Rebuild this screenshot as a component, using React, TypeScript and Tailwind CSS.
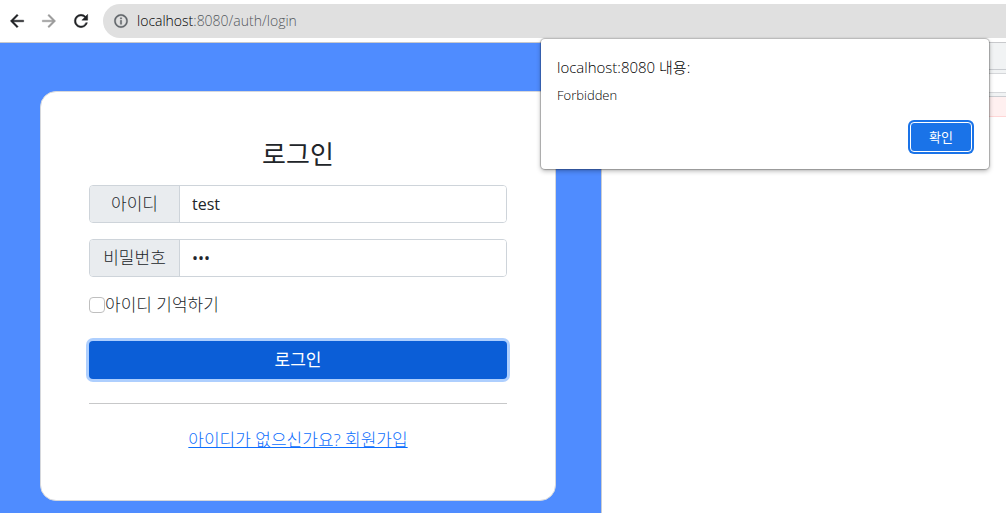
import React, { useState } from 'react';

const icons = {
    back: 'M20 11H7.83l5.59-5.59L12 4l-8 8 8 8 1.41-1.41L7.83 13H20v-2z',
    forward: 'M12 4l-1.41 1.41L16.17 11H4v2h12.17l-5.58 5.59L12 20l8-8z',
    reload: 'M17.65 6.35A7.958 7.958 0 0 0 12 4a8 8 0 1 0 7.73 10h-2.08A5.99 5.99 0 0 1 12 18c-3.31 0-6-2.69-6-6s2.69-6 6-6c1.66 0 3.14.69 4.22 1.78L13 11h7V4l-2.35 2.35z',
    info: 'M11 7h2v2h-2zm0 4h2v6h-2zm1-9C6.48 2 2 6.48 2 12s4.48 10 10 10 10-4.48 10-10S17.52 2 12 2zm0 18c-4.41 0-8-3.59-8-8s3.59-8 8-8 8 3.59 8 8-3.59 8-8 8z',
};

const Icon = ({ name, className }: { name: keyof typeof icons; className: string }) => {
    return (
        <svg viewBox="0 0 24 24" fill="currentColor" stroke="currentColor" strokeWidth={0.5} className={className}>
            <path d={icons[name]} />
        </svg>
    );
};

const BrowserBar = () => {
    return (
        <header className="flex items-center h-[43px] border-b border-[#c8c9cc] bg-white">
            <nav className="flex items-center gap-3 pl-[7px] pr-3 text-[#202124]">
                <button type="button" aria-label="Back">
                    <Icon name="back" className="size-5" />
                </button>
                <button type="button" aria-label="Forward" className="text-[#9b9b9b]">
                    <Icon name="forward" className="size-5" />
                </button>
                <button type="button" aria-label="Reload">
                    <Icon name="reload" className="size-5" />
                </button>
            </nav>
            <div className="flex flex-1 items-center gap-2 h-[34px] pl-[10px] rounded-l-full bg-[#e0e0e0]">
                <Icon name="info" className="size-4 shrink-0 text-[#5f6368]" />
                <div
                    role="textbox"
                    aria-label="Address"
                    contentEditable
                    suppressContentEditableWarning
                    className="flex-1 text-sm text-black outline-none"
                >
                    localhost<span className="text-[#54585d]">:8080/auth/login</span>
                </div>
            </div>
        </header>
    );
};

const Field = ({ id, label, type, value, onChange }: any) => {
    return (
        <div className="flex h-[38px] mb-4 border border-[#ced4da] rounded-sm overflow-hidden">
            <label
                htmlFor={id}
                className="flex items-center justify-center w-[90px] shrink-0 border-r border-[#ced4da] bg-[#e9ecef] text-[17px]"
            >
                {label}
            </label>
            <input
                id={id}
                type={type}
                value={value}
                onChange={(e) => onChange(e.target.value)}
                className="flex-1 min-w-0 px-3 text-base font-normal bg-white outline-none"
            />
        </div>
    );
};

const LoginCard = () => {
    const [userId, setUserId] = useState('test');
    const [password, setPassword] = useState('123');
    const [remember, setRemember] = useState(false);

    return (
        <form
            onSubmit={(e) => e.preventDefault()}
            className="p-12 border border-[#d6d8dc] rounded-2xl bg-white text-[#212529]"
        >
            <h1 className="mb-4 text-[26px] leading-[29px] font-normal text-center">로그인</h1>
            <Field id="userId" label="아이디" type="text" value={userId} onChange={setUserId} />
            <Field id="password" label="비밀번호" type="password" value={password} onChange={setPassword} />
            <div className="flex items-center h-6 mb-6">
                <input
                    id="remember"
                    type="checkbox"
                    checked={remember}
                    onChange={(e) => setRemember(e.target.checked)}
                    className="size-4 appearance-none border border-[#bfbfbf] rounded-sm bg-white checked:bg-[#0d6efd]"
                />
                <label htmlFor="remember" className="text-[17px] leading-6">
                    아이디 기억하기
                </label>
            </div>
            <button
                type="submit"
                className="block w-full h-[38px] rounded-sm bg-[#0b5ed7] ring-3 ring-[#aecffe] text-[17px] font-normal text-white"
            >
                로그인
            </button>
            <hr className="my-6 border-[#c7c8c9]" />
            <p className="text-center text-[17px] leading-6">
                <a href="/auth/signup" className="text-[#0d6efd] underline">
                    아이디가 없으신가요? 회원가입
                </a>
            </p>
        </form>
    );
};

// docked inspector, mostly hidden behind the alert
const DevTools = () => {
    return (
        <aside className="w-[404px] shrink-0 bg-white">
            <div className="h-[27px] border-b border-[#cacdd1] bg-[#f1f3f4]" />
            <div className="h-[27px] pt-[3px] pb-[3px] border-b border-[#cacdd1] bg-[#f1f3f4]">
                <div className="h-full border-y border-[#d5d7da] bg-white" />
            </div>
            <div className="h-5 border-b border-[#ffd6d6] bg-[#fff0f0]" />
        </aside>
    );
};

const Alert = () => {
    return (
        <div
            role="alertdialog"
            aria-labelledby="alert-title"
            className="absolute top-[39px] right-[17px] flex flex-col w-[448px] h-[130px] pl-4 pr-[17px] pt-4 pb-[17px] rounded-sm bg-white text-black shadow-[0_0_1px_1px_rgba(0,0,0,0.25),0_2px_5px_rgba(0,0,0,0.3)]"
        >
            <h2 id="alert-title" className="text-[15px] leading-6">
                localhost:8080 내용:
            </h2>
            <p className="mt-2 text-[13px] leading-4">Forbidden</p>
            <button
                type="button"
                className="mt-auto self-end w-[62px] h-[30px] border border-white rounded-sm bg-[#1a73e8] ring-2 ring-[#1a73e8] text-[13px] leading-4 font-normal text-white"
            >
                확인
            </button>
        </div>
    );
};

export default function App() {
    return (
        <div className="relative flex flex-col min-h-screen overflow-hidden bg-white font-['Open_Sans','Noto_Sans_CJK_KR',sans-serif] font-light">
            <BrowserBar />
            <div className="flex flex-1">
                <main className="flex-1 pt-12 pb-3 pl-10 pr-[45px] border-r border-[#cacdd1] bg-[#4f8cff]">
                    <LoginCard />
                </main>
                <DevTools />
            </div>
            <Alert />
        </div>
    );
}
